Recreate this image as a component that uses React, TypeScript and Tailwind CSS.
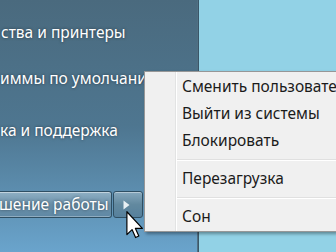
import React from 'react';

const font = { fontFamily: '"Noto Sans", "Open Sans", sans-serif' };

const MenuItem: React.FC<{ label: string }> = ({ label }) => (
  <div className="flex h-[27px] items-center pl-[37px] text-[15.5px] text-[#1b1b1b] whitespace-nowrap">
    {label}
  </div>
);

const Separator: React.FC = () => (
  <div className="flex h-[11px] items-center pl-[32px]">
    <div className="h-[2px] w-full border-t border-[#e0e0e0] border-b border-b-white" />
  </div>
);

const Cursor: React.FC = () => (
  <svg width="18" height="28" viewBox="0 0 12 19" className="absolute left-[126px] top-[211px]">
    <path
      d="M0.5 0.5 L0.5 16 L4 12.6 L6.4 18 L8.6 17 L6.3 11.8 L11 11.8 Z"
      fill="#ffffff"
      stroke="#000000"
      strokeWidth="0.8"
      strokeLinejoin="round"
    />
  </svg>
);

export default function App() {
  return (
    <div className="relative flex h-[252px] w-[336px] overflow-hidden" style={font}>
      {/* start menu right column */}
      <div className="flex w-[197px] shrink-0 flex-col bg-gradient-to-b from-[#4a6a7e] via-[#4e7690] to-[#6aa4cc] text-[15.5px] text-white [text-shadow:0_0_3px_rgba(0,0,0,0.5)]">
        <div className="mt-[21px] h-[22px] whitespace-nowrap pl-[1px]">ства и принтеры</div>
        <div className="mt-[24px] h-[22px] whitespace-nowrap">иммы по умолчанию</div>
        <div className="mt-[30px] h-[22px] whitespace-nowrap">ка и поддержка</div>
        <div className="mt-[50px] flex h-[27px] gap-[1px]">
          <div className="flex w-[112px] items-center overflow-hidden rounded-r-[3px] border border-l-0 border-[#2f4f63] bg-gradient-to-b from-[#8fb0c4] via-[#6b91aa] to-[#5f88a4] shadow-[inset_0_1px_0_rgba(255,255,255,0.45),inset_0_-1px_0_rgba(255,255,255,0.3)]">
            <span className="-ml-[1px] whitespace-nowrap">шение работы</span>
          </div>
          <div className="flex w-[30px] items-center justify-center rounded-[3px] border border-[#2f4f63] bg-gradient-to-b from-[#86a8bd] via-[#62899f] to-[#56809c] shadow-[inset_0_1px_0_rgba(255,255,255,0.4)]">
            <svg width="7" height="10" viewBox="0 0 7 10" className="-ml-[4px]">
              <path d="M0.5 0.5 L6.5 5 L0.5 9.5 Z" fill="#e8f0f4" />
            </svg>
          </div>
        </div>
      </div>
      <div className="w-[2px] shrink-0 bg-gradient-to-r from-[#5e7d90] to-[#2e4a5c]" />
      {/* desktop */}
      <div className="flex-1 bg-[#92d2e6]" />

      {/* shutdown options menu */}
      <div className="absolute left-[144px] top-[71px] w-[192px] overflow-hidden border border-r-0 border-[#979797] bg-[#f0f0f0] py-[1px] shadow-[2px_2px_3px_rgba(0,0,0,0.35)]">
        <div className="absolute bottom-0 left-[30px] top-0 w-[2px] border-l border-[#e2e3e3] border-r border-r-white" />
        <MenuItem label="Сменить пользователя" />
        <MenuItem label="Выйти из системы" />
        <MenuItem label="Блокировать" />
        <Separator />
        <MenuItem label="Перезагрузка" />
        <Separator />
        <MenuItem label="Сон" />
      </div>

      <Cursor />
    </div>
  );
}
